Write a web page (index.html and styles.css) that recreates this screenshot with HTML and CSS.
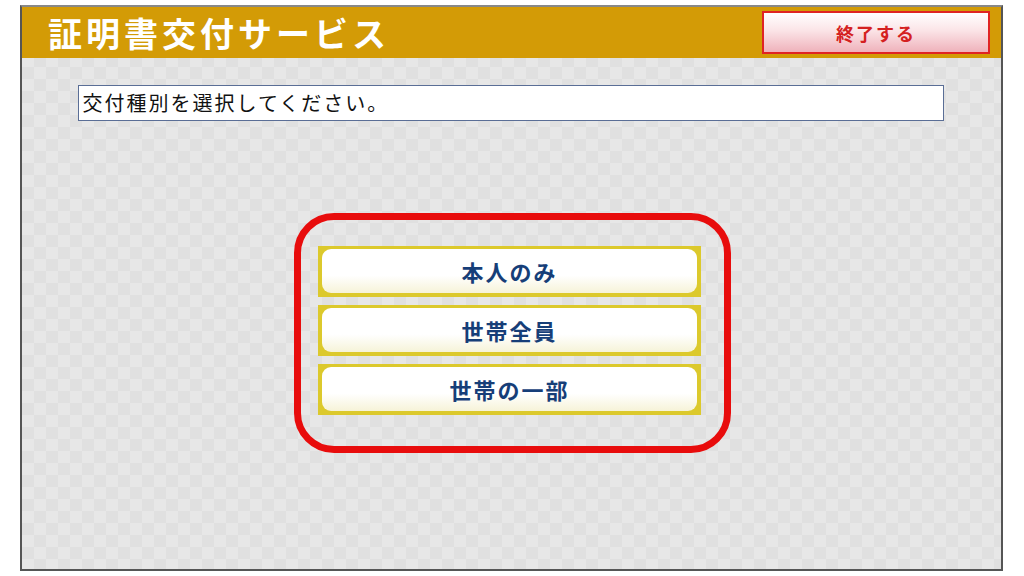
FILE: index.html
```html
<!DOCTYPE html>
<html lang="ja">
<head>
    <meta charset="UTF-8">
    <meta name="viewport" content="width=device-width, initial-scale=1.0">
    <title>証明書交付サービス</title>
    <link rel="stylesheet" href="styles.css">
</head>
<body>

    <div class="screen">
        <div class="header">
            <h1 class="title">証明書交付サービス</h1>
            <button class="exit-btn">終了する</button>
        </div>

        <div class="content">
            <div class="guide">交付種別を選択してください。</div>

            <div class="choice-box">
                <button class="choice-btn"><span>本人のみ</span></button>
                <button class="choice-btn"><span>世帯全員</span></button>
                <button class="choice-btn"><span>世帯の一部</span></button>
            </div>
        </div>
    </div>

</body>
</html>
```

FILE: styles.css
```css
body {
    margin: 0;
    padding: 0;
    background: #ffffff;
    font-family: 'Noto Sans CJK JP', 'Noto Sans', sans-serif;
}

.screen {
    box-sizing: border-box;
    width: 983px;
    height: 566px;
    margin: 5px 0 0 20px;
    border: 2px solid #555555;
    border-top-color: #888888;
    display: flex;
    flex-direction: column;
    background-color: #e7e7e7;
    background-image:
        linear-gradient(45deg, #e0e0e0 25%, transparent 25%, transparent 75%, #e0e0e0 75%),
        linear-gradient(45deg, #e0e0e0 25%, transparent 25%, transparent 75%, #e0e0e0 75%);
    background-size: 24px 24px;
    background-position: 0 0, 12px 12px;
}

.header {
    height: 51px;
    background: #d39b06;
    display: flex;
    align-items: center;
    justify-content: space-between;
    padding: 0 11px 0 26px;
    flex-shrink: 0;
}

.title {
    margin: 0;
    color: #ffffff;
    font-size: 34px;
    font-weight: bold;
    letter-spacing: 4px;
    line-height: 1;
}

.exit-btn {
    width: 228px;
    height: 43px;
    border: 2px solid #e02424;
    background: linear-gradient(to bottom, #ffffff 0%, #fbe4e7 45%, #efb2bb 100%);
    color: #d42020;
    font-family: inherit;
    font-size: 18px;
    font-weight: bold;
    letter-spacing: 2px;
    cursor: pointer;
}

.content {
    flex: 1;
    display: flex;
    flex-direction: column;
    align-items: center;
    padding-top: 27px;
}

.guide {
    box-sizing: border-box;
    width: 866px;
    height: 36px;
    margin-left: -2px;
    background: #ffffff;
    border: 1px solid #5a6e96;
    padding: 0 0 0 4px;
    font-size: 20px;
    letter-spacing: 2px;
    line-height: 33px;
    color: #111111;
}

.choice-box {
    box-sizing: border-box;
    width: 437px;
    height: 240px;
    margin-top: 92px;
    margin-left: 2px;
    border: 7px solid #e80c0c;
    border-radius: 40px;
    padding: 26px 0 0 17px;
    display: flex;
    flex-direction: column;
    gap: 8px;
}

.choice-btn {
    width: 383px;
    height: 51px;
    padding: 3px 4px 4px 4px;
    background: #dcc92c;
    border: none;
    cursor: pointer;
    font-family: inherit;
}

.choice-btn span {
    display: flex;
    align-items: center;
    justify-content: center;
    height: 100%;
    border-radius: 9px;
    background: linear-gradient(to bottom, #ffffff 0%, #ffffff 60%, #f6f3d8 100%);
    color: #163e78;
    font-size: 22px;
    font-weight: bold;
    letter-spacing: 2px;
}
```
